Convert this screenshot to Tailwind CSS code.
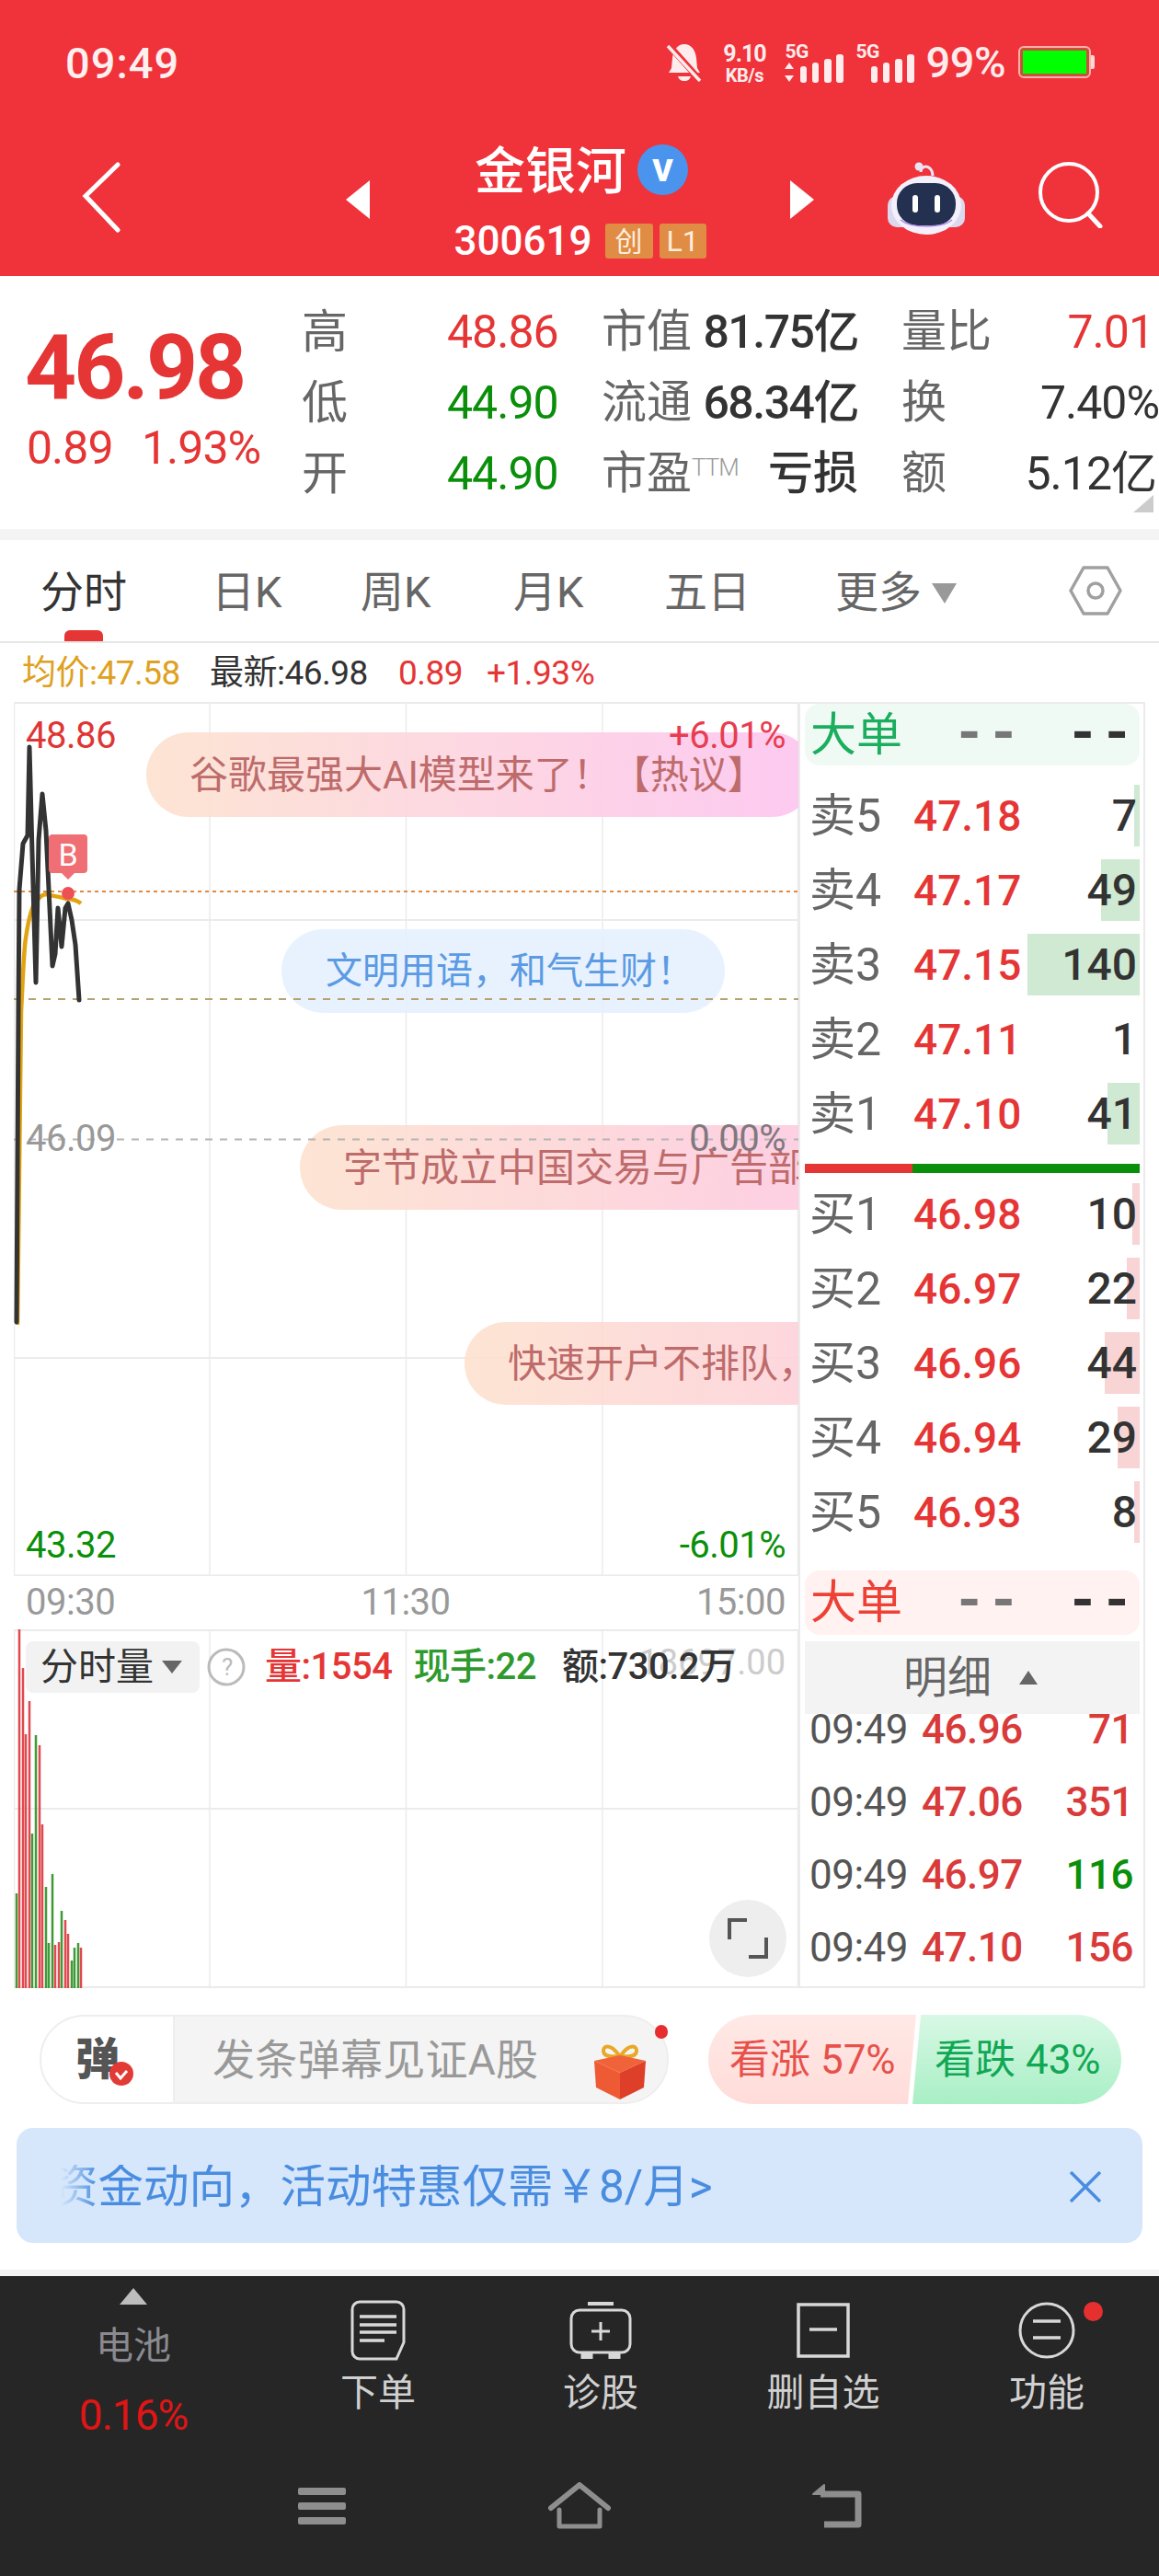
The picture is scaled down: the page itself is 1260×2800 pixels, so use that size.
<!DOCTYPE html>
<html lang="zh-CN">
<head>
  <meta charset="UTF-8">
  <meta name="viewport" content="width=device-width, initial-scale=1.0">
  <title>金银河 300619</title>
  <script src="https://cdn.jsdelivr.net/npm/@tailwindcss/browser@4"></script>
</head>

<body class="w-[1260px] h-[2800px] overflow-hidden bg-white text-[#333] [font-family:Roboto,'Noto_Sans_CJK_SC',sans-serif]">

  <!-- header -->
  <header class="h-[300px] bg-[#f0323b] text-white">
    <div class="h-[135px] flex justify-between pl-[71px] pr-[70px]">
      <span class="text-[47px] leading-[135px] font-medium tracking-[1px] text-[#fff0f0] mt-[1px]">09:49</span>
      <div class="flex items-start pt-[47px] text-[#ffecec]">
        <svg width="40" height="42" viewBox="0 0 40 42" fill="#ffecec"><path d="M20 1c8 0 12 7 13 15l1 11 3 5H3l3-5 1-11C8 8 12 1 20 1z"/><path d="M13 36h14c-1 3-3 5-7 5s-6-2-7-5z"/><path d="M3 2l34 38" stroke="#f0323b" stroke-width="7"/><path d="M2 3l35 38" stroke="#ffecec" stroke-width="3.5"/></svg>
        <div class="ml-[19px] w-[52px] flex flex-col items-center font-bold">
          <span class="text-[25px] leading-[24px] tracking-[-1px]">9.10</span>
          <span class="text-[20px] leading-[21px] mt-[1px] tracking-[-0.5px]">KB/s</span>
        </div>
        <div class="relative ml-[18px] w-[65px] h-[44px]">
          <span class="absolute left-0 -top-[2px] text-[21px] leading-[22px] font-bold tracking-[-0.5px]">5G</span>
          <svg class="absolute left-0 bottom-0" width="65" height="32" viewBox="0 0 65 32" fill="#ffecec"><path d="M5 9l5 7H0zM5 30l5-7H0z"/><rect x="17" y="13" width="7" height="18" rx="3"/><rect x="30" y="9" width="7" height="22" rx="3"/><rect x="43" y="5" width="8" height="26" rx="3"/><rect x="56" y="0" width="8" height="31" rx="3"/></svg>
        </div>
        <div class="relative ml-[12px] w-[65px] h-[44px]">
          <span class="absolute left-0 -top-[2px] text-[21px] leading-[22px] font-bold tracking-[-0.5px]">5G</span>
          <svg class="absolute left-0 bottom-0" width="65" height="32" viewBox="0 0 65 32" fill="#ffecec"><rect x="17" y="13" width="7" height="18" rx="3"/><rect x="30" y="9" width="7" height="22" rx="3"/><rect x="43" y="5" width="8" height="26" rx="3"/><rect x="56" y="0" width="8" height="31" rx="3"/></svg>
        </div>
        <span class="ml-[11px] text-[47px] leading-[42px] font-medium tracking-[-0.5px]">99%</span>
        <div class="ml-[14px] mt-[3px] flex items-center">
          <div class="w-[79px] h-[35px] rounded-[6px] border-2 border-[#ffb0a8] p-[3px] bg-[#c8503a]">
            <div class="w-full h-full bg-[#00ff00]"></div>
          </div>
          <div class="w-[4px] h-[15px] bg-[#ffd8d8] rounded-r-[2px]"></div>
        </div>
      </div>
    </div>
    <div class="h-[165px] flex pl-[88px]">
      <svg class="mt-[40px]" width="44" height="78" viewBox="0 0 44 78" fill="none" stroke="#fff" stroke-width="5" stroke-linecap="round"><path d="M40 4L5 38l35 37"/></svg>
      <svg class="ml-[243px] mt-[60px]" width="28" height="44" viewBox="0 0 28 44" fill="#fff"><path d="M27 1v42L1 22z"/></svg>
      <div class="w-[455px] flex flex-col items-center">
        <div class="flex items-center h-[80px] mt-[11px] ml-[3px]">
          <span class="text-[55px] font-medium leading-none">金银河</span>
          <span class="ml-[12px] w-[55px] h-[55px] rounded-full bg-[#4a94ee] flex items-center justify-center text-[34px] leading-none font-black -mt-[3px]">V</span>
        </div>
        <div class="flex items-center mt-[17px] h-[38px]">
          <span class="text-[44px] leading-none font-medium">300619</span>
          <span class="ml-[14px] w-[52px] h-[38px] rounded-[3px] bg-[#e08c45] text-[#ffeedd] text-[30px] flex items-center justify-center">创</span>
          <span class="ml-[7px] w-[51px] h-[38px] rounded-[3px] bg-[#e08c45] text-[#ffeedd] text-[32px] flex items-center justify-center">L1</span>
        </div>
      </div>
      <svg class="mt-[60px]" width="28" height="44" viewBox="0 0 28 44" fill="#fff"><path d="M1 1v42l26-21z"/></svg>
      <svg class="ml-[79px] mt-[40px]" width="86" height="80" viewBox="0 0 86 80">
        <path d="M36 12c0-5 5-8 10-4 2 2 3 5 3 8" fill="none" stroke="#e8e4f4" stroke-width="3"/>
        <circle cx="34" cy="6" r="4.5" fill="#e8e4f4"/>
        <rect x="0" y="38" width="84" height="34" rx="10" fill="#dcd8ee"/>
        <ellipse cx="42" cy="48" rx="38" ry="32" fill="#f3f0fb"/>
        <rect x="10" y="24" width="64" height="46" rx="22" fill="#24304f"/>
        <path d="M14 64c6 5 14 7 28 7s22-2 28-7" fill="none" stroke="#a98be8" stroke-width="1.5"/>
        <rect x="27" y="37" width="6" height="19" rx="3" fill="#fff"/>
        <rect x="51" y="37" width="6" height="19" rx="3" fill="#fff"/>
      </svg>
      <svg class="ml-[78px] mt-[41px]" width="70" height="72" viewBox="0 0 70 72" fill="none" stroke="#fff" stroke-width="4"><circle cx="33" cy="33" r="31"/><path d="M54 56l13 14" stroke-width="5" stroke-linecap="round"/></svg>
    </div>
  </header>

  <!-- quote summary -->
  <section class="relative h-[275px] flex">
    <div class="w-[328px] pl-[27px] text-[#e53535]">
      <div class="mt-[50px] text-[98px] leading-[100px] font-bold tracking-[-3px]">46.98</div>
      <div class="mt-[12px] flex text-[50px] leading-[50px] tracking-[-1px]">
        <span class="w-[127px] pl-[2px]">0.89</span>
        <span>1.93%</span>
      </div>
    </div>
    <div class="w-[932px] pt-[22px] grid grid-cols-[158px_168px_279px_47px_280px] auto-rows-[77px] items-center text-[50px] leading-none tracking-[-1px]">
      <span class="text-[#666]">高</span><span class="text-[#e53535]">48.86</span>
      <div class="flex justify-between items-center"><span class="text-[#666] text-[49px] tracking-normal">市值</span><span class="text-[#333] font-medium tracking-[-1.5px]">81.75亿</span></div>
      <span></span>
      <div class="flex justify-between items-center pr-[6px]"><span class="text-[#666] text-[49px] tracking-normal">量比</span><span class="text-[#e53535]">7.01</span></div>

      <span class="text-[#666]">低</span><span class="text-[#0a8f0a]">44.90</span>
      <div class="flex justify-between items-center"><span class="text-[#666] text-[49px] tracking-normal">流通</span><span class="text-[#333] font-medium tracking-[-1.5px]">68.34亿</span></div>
      <span></span>
      <div class="flex justify-between items-center"><span class="text-[#666] text-[49px] tracking-normal">换</span><span class="text-[#333]">7.40%</span></div>

      <span class="text-[#666]">开</span><span class="text-[#0a8f0a]">44.90</span>
      <div class="flex justify-between items-center"><span class="text-[#666] text-[49px] tracking-normal">市盈<sup class="text-[26px] text-[#999] -top-[14px] tracking-[-1px] font-light">TTM</sup></span><span class="text-[#333] font-medium text-[49px] tracking-normal">亏损</span></div>
      <span></span>
      <div class="flex justify-between items-center pr-[3px]"><span class="text-[#666] text-[49px] tracking-normal">额</span><span class="text-[#333]">5.12亿</span></div>
    </div>
    <svg class="absolute right-[6px] bottom-[18px]" width="22" height="19" viewBox="0 0 22 19" fill="#ccc"><path d="M22 0v19H0z"/></svg>
  </section>
  <div class="h-[12px] bg-[#f4f4f4]"></div>

  <!-- period tabs -->
  <nav class="relative h-[112px] flex items-center pl-[44px] pt-[5px] border-b-2 border-[#e6e6e6] text-[47px] text-[#666]">
    <span class="w-[186px] text-[#333]">分时</span>
    <span class="w-[162px]">日K</span>
    <span class="w-[166px]">周K</span>
    <span class="w-[164px]">月K</span>
    <span class="w-[186px]">五日</span>
    <span class="flex items-center">更多<svg class="ml-[11px]" width="27" height="22" viewBox="0 0 27 22" fill="#999"><path d="M0 0h27L14 22z"/></svg></span>
    <svg class="ml-[122px] -mt-[5px]" width="58" height="56" viewBox="0 0 58 56" fill="none" stroke="#a0a0a0" stroke-width="3.5" stroke-linejoin="round"><path d="M16 3h26l14 25-14 25H16L2 28z"/><circle cx="29" cy="28" r="8"/></svg>
    <span class="absolute left-[70px] bottom-0 w-[42px] h-[12px] rounded-t-[6px] bg-[#e53535]"></span>
  </nav>

  <div class="h-[64px] flex items-center pl-[24px] text-[37px] tracking-[-0.5px] leading-none">
    <span class="w-[204px] text-[#e0a020]">均价:47.58</span>
    <span class="w-[205px] text-[#333]">最新:46.98</span>
    <span class="w-[96px] text-[#e53535]">0.89</span>
    <span class="text-[#e53535]">+1.93%</span>
  </div>

  <main class="flex pl-[15px]">
    <!-- charts -->
    <div class="w-[853px]">
      <div class="relative h-[950px] overflow-hidden">
        <svg class="absolute inset-0" width="853" height="950" viewBox="15 763 853 950" fill="none" stroke="#ebebeb" stroke-width="1.5">
          <path d="M15.5 763v950M228 763v950M441.5 763v950M655 763v950M867.5 763v950"/>
          <path d="M15 764h853M15 1000h853M15 1476h853M15 1712.5h853" stroke-width="2"/>
        </svg>
        <div class="absolute left-[144px] top-[33px] w-[726px] h-[92px] rounded-full bg-gradient-to-r from-[#fde2cf] to-[#fdc4f0] opacity-90 flex items-center pl-[47px] text-[42px] text-[#b85c5c] whitespace-nowrap">谷歌最强大AI模型来了！【热议】</div>
        <div class="absolute left-[291px] top-[247px] w-[482px] h-[91px] rounded-full bg-[#e6f1fe] opacity-90 flex items-center pl-[48px] text-[40px] text-[#4a90e2] whitespace-nowrap">文明用语，和气生财！</div>
        <div class="absolute left-[311px] top-[460px] w-[700px] h-[92px] rounded-full bg-gradient-to-r from-[#fde2cf] to-[#fdc4e4] opacity-90 flex items-center pl-[47px] text-[42px] text-[#b85c5c] whitespace-nowrap">字节成立中国交易与广告部门</div>
        <div class="absolute left-[490px] top-[674px] w-[700px] h-[90px] rounded-full bg-gradient-to-r from-[#fde2cf] to-[#fdc4e4] opacity-90 flex items-center pl-[47px] text-[42px] text-[#b85c5c] whitespace-nowrap">快速开户不排队，</div>

        <svg class="absolute inset-0" width="853" height="950" viewBox="15 763 853 950" fill="none">
          <path d="M15 969h853" stroke="#e08a40" stroke-width="2" stroke-dasharray="4 4"/>
          <path d="M15 1086h853" stroke="#b8a070" stroke-width="2" stroke-dasharray="8 8"/>
          <path d="M15 1238.5h853" stroke="#b4b4b4" stroke-width="2" stroke-dasharray="8 8"/>
          <path d="M19 1440C20 1280 22 1160 23 1100C25 1060 26 1030 28 1020C30 1005 32 995 36 985C42 975 46 972 50 972C58 974 66 975 72 977C78 977 84 979 88 982" stroke="#e2a312" stroke-width="4.5"/>
          <path d="M18 1437L20 1100L21 967L25 917L30 908L32 812L35 927L39 1068L42 913L46 863L50 903L57 1050L60 1037L63 987L67 1029L71 987L74 982L78 1000L82 1027L86 1087" stroke="#333" stroke-width="5" stroke-linejoin="round" stroke-linecap="round"/>
          <path d="M57 907h34a4 4 0 014 4v34a4 4 0 01-4 4H81l-7 7-7-7H57a4 4 0 01-4-4v-34a4 4 0 014-4z" fill="#ef6f74"/>
          <circle cx="74" cy="971" r="7" fill="#ee5055"/>
        </svg>
        <span class="absolute left-[38px] top-[149px] w-[42px] text-center text-[#fff] text-[34px] leading-none">B</span>

        <span class="absolute left-[13px] top-[19px] text-[40px] leading-[36px] tracking-[-0.5px] text-[#df3535]">48.86</span>
        <span class="absolute right-[14px] top-[19px] text-[40px] leading-[36px] tracking-[-0.5px] text-[#e83c50]">+6.01%</span>
        <span class="absolute left-[13px] top-[457px] text-[40px] leading-[36px] tracking-[-0.5px] text-[#999]">46.09</span>
        <span class="absolute right-[14px] top-[457px] text-[40px] leading-[36px] tracking-[-0.5px] text-[#807880]">0.00%</span>
        <span class="absolute left-[13px] bottom-[15px] text-[40px] leading-[36px] tracking-[-0.5px] text-[#0a8f0a]">43.32</span>
        <span class="absolute right-[14px] bottom-[15px] text-[40px] leading-[36px] tracking-[-0.5px] text-[#0a8f0a]">-6.01%</span>
      </div>

      <div class="h-[58px] flex items-center justify-between pl-[13px] pr-[14px] text-[40px] tracking-[-0.5px] text-[#999] leading-none">
        <span>09:30</span><span>11:30</span><span>15:00</span>
      </div>

      <div class="relative h-[390px]">
        <svg class="absolute inset-0" width="853" height="390" viewBox="15 1771 853 390" fill="none" stroke="#ebebeb" stroke-width="1.5">
          <path d="M15.5 1771v390M228 1771v390M441.5 1771v390M655 1771v390M867.5 1771v390"/>
          <path d="M15 1772h853M15 1966h853M15 2160h853" stroke-width="2"/>
          <g stroke="#3f9a36" stroke-width="2.5">
            <path d="M18 2161V2058M35 2161V1993M39 2161V1886M50 2161V2051M53 2161V2112M57 2161V2037M67 2161V2077M78 2161V2131M81 2161V2117M85 2161V2112"/>
          </g>
          <g stroke="#df4a4f" stroke-width="2.5">
            <path d="M21 2161V1771M25 2161V1813M28 2161V1885M32 2161V1849M43 2161V1897M46 2161V1983M60 2161V2114M64 2161V2111M71 2161V2087M74 2161V2102M88 2161V2117"/>
          </g>
        </svg>
        <span class="absolute right-[14px] top-[20px] text-[38px] leading-[32px] text-[#ccc]">18697.00</span>
        <div class="relative flex items-center pt-[13px] pl-[13px] text-[40px] leading-none tracking-[-0.5px]">
          <div class="w-[189px] h-[56px] rounded-[8px] bg-[#f2f2f2] flex items-center pl-[16px] text-[41px] tracking-normal">分时量<svg class="ml-[9px]" width="22" height="14" viewBox="0 0 22 14" fill="#666"><path d="M0 0h22L11 14z"/></svg></div>
          <svg class="ml-[8px]" width="42" height="42" viewBox="0 0 42 42" fill="none" stroke="#bbb" stroke-width="3"><circle cx="21" cy="21" r="19"/></svg>
          <span class="-ml-[31px] w-[22px] text-center text-[26px] text-[#bbb]">?</span>
          <span class="ml-[30px] text-[#e53535] font-medium">量:1554</span>
          <span class="ml-[23px] text-[#2e9a2e] font-medium">现手:22</span>
          <span class="ml-[28px] text-[#333] font-medium">额:730.2万</span>
        </div>
        <div class="absolute right-[13px] bottom-[12px] w-[84px] h-[84px] rounded-full bg-[#eeeeee] flex items-center justify-center">
          <svg width="46" height="46" viewBox="0 0 46 46" fill="none" stroke="#555" stroke-width="4"><path d="M3 24V3h19M43 22v21H24"/></svg>
        </div>
      </div>
    </div>

    <!-- order book -->
    <aside class="w-[377px] h-[1398px] border-x-2 border-t-2 border-b-2 border-[#ebebeb] pl-[5px] pr-[4px] text-[46px] leading-none">
      <div class="h-[67px] rounded-[16px] bg-[#f0faf4] flex items-center pl-[6px] text-[#1aae5e] text-[50px] whitespace-nowrap">
        <span class="w-[169px]">大单</span><span class="w-[130px] -mt-[4px] text-[64px] text-[#777] font-bold tracking-[12px]">--</span><span class="-mt-[4px] text-[64px] text-[#333] font-bold tracking-[12px]">--</span>
      </div>

      <div class="mt-[14px]">
        <div class="relative h-[81px] flex items-center pl-[5px]"><span class="w-[113px] text-[#666] text-[50px]">卖5</span><span class="text-[#e53535] font-medium">47.18</span><span class="absolute right-0 top-[7px] h-[67px] w-[6px] bg-[#cfe9d2]"></span><span class="relative ml-auto pr-[3px] text-[48px] font-medium text-[#333]">7</span></div>
        <div class="relative h-[81px] flex items-center pl-[5px]"><span class="w-[113px] text-[#666] text-[50px]">卖4</span><span class="text-[#e53535] font-medium">47.17</span><span class="absolute right-0 top-[7px] h-[67px] w-[42px] bg-[#cfe9d2]"></span><span class="relative ml-auto pr-[3px] text-[48px] font-medium text-[#333]">49</span></div>
        <div class="relative h-[81px] flex items-center pl-[5px]"><span class="w-[113px] text-[#666] text-[50px]">卖3</span><span class="text-[#e53535] font-medium">47.15</span><span class="absolute right-0 top-[7px] h-[67px] w-[122px] bg-[#cfe9d2]"></span><span class="relative ml-auto pr-[3px] text-[48px] font-medium text-[#333]">140</span></div>
        <div class="relative h-[81px] flex items-center pl-[5px]"><span class="w-[113px] text-[#666] text-[50px]">卖2</span><span class="text-[#e53535] font-medium">47.11</span><span class="relative ml-auto pr-[3px] text-[48px] font-medium text-[#333]">1</span></div>
        <div class="relative h-[81px] flex items-center pl-[5px]"><span class="w-[113px] text-[#666] text-[50px]">卖1</span><span class="text-[#e53535] font-medium">47.10</span><span class="absolute right-0 top-[7px] h-[67px] w-[35px] bg-[#cfe9d2]"></span><span class="relative ml-auto pr-[3px] text-[48px] font-medium text-[#333]">41</span></div>
      </div>

      <div class="mt-[14px] h-[10px] flex">
        <div class="w-[117px] bg-[#e53535]"></div>
        <div class="flex-1 bg-[#0a8f0a]"></div>
      </div>

      <div class="mt-[4px]">
        <div class="relative h-[81px] flex items-center pl-[5px]"><span class="w-[113px] text-[#666] text-[50px]">买1</span><span class="text-[#e53535] font-medium">46.98</span><span class="absolute right-0 top-[7px] h-[67px] w-[8px] bg-[#f8d4d4]"></span><span class="relative ml-auto pr-[3px] text-[48px] font-medium text-[#333]">10</span></div>
        <div class="relative h-[81px] flex items-center pl-[5px]"><span class="w-[113px] text-[#666] text-[50px]">买2</span><span class="text-[#e53535] font-medium">46.97</span><span class="absolute right-0 top-[7px] h-[67px] w-[14px] bg-[#f8d4d4]"></span><span class="relative ml-auto pr-[3px] text-[48px] font-medium text-[#333]">22</span></div>
        <div class="relative h-[81px] flex items-center pl-[5px]"><span class="w-[113px] text-[#666] text-[50px]">买3</span><span class="text-[#e53535] font-medium">46.96</span><span class="absolute right-0 top-[7px] h-[67px] w-[38px] bg-[#f8d4d4]"></span><span class="relative ml-auto pr-[3px] text-[48px] font-medium text-[#333]">44</span></div>
        <div class="relative h-[81px] flex items-center pl-[5px]"><span class="w-[113px] text-[#666] text-[50px]">买4</span><span class="text-[#e53535] font-medium">46.94</span><span class="absolute right-0 top-[7px] h-[67px] w-[24px] bg-[#f8d4d4]"></span><span class="relative ml-auto pr-[3px] text-[48px] font-medium text-[#333]">29</span></div>
        <div class="relative h-[81px] flex items-center pl-[5px]"><span class="w-[113px] text-[#666] text-[50px]">买5</span><span class="text-[#e53535] font-medium">46.93</span><span class="absolute right-0 top-[7px] h-[67px] w-[6px] bg-[#f8d4d4]"></span><span class="relative ml-auto pr-[3px] text-[48px] font-medium text-[#333]">8</span></div>
      </div>

      <div class="mt-[23px] h-[70px] rounded-[16px] bg-[#fff2f1] flex items-center pl-[6px] text-[#ee4035] text-[50px] whitespace-nowrap">
        <span class="w-[169px]">大单</span><span class="w-[130px] -mt-[4px] text-[64px] text-[#777] font-bold tracking-[12px]">--</span><span class="-mt-[4px] text-[64px] text-[#333] font-bold tracking-[12px]">--</span>
      </div>

      <div class="mt-[7px] h-[79px] bg-[#f3f3f3] flex items-center pl-[107px] text-[48px] text-[#666]">
        <span>明细</span>
        <svg class="ml-[30px]" width="20" height="15" viewBox="0 0 20 15" fill="#666"><path d="M10 0l10 15H0z"/></svg>
      </div>

      <div class="h-[296px] overflow-hidden text-[44px] tracking-[-0.5px]">
        <div class="-mt-[23px]">
          <div class="h-[79px] flex items-center pl-[5px] pr-[7px]"><span class="w-[122px] text-[#555]">09:49</span><span class="text-[#d93a3a] font-medium">46.96</span><span class="ml-auto text-[#d93a3a] font-medium">71</span></div>
          <div class="h-[79px] flex items-center pl-[5px] pr-[7px]"><span class="w-[122px] text-[#555]">09:49</span><span class="text-[#d93a3a] font-medium">47.06</span><span class="ml-auto text-[#d93a3a] font-medium">351</span></div>
          <div class="h-[79px] flex items-center pl-[5px] pr-[7px]"><span class="w-[122px] text-[#555]">09:49</span><span class="text-[#d93a3a] font-medium">46.97</span><span class="ml-auto text-[#0a8f0a] font-medium">116</span></div>
          <div class="h-[79px] flex items-center pl-[5px] pr-[7px]"><span class="w-[122px] text-[#555]">09:49</span><span class="text-[#d93a3a] font-medium">47.10</span><span class="ml-auto text-[#d93a3a] font-medium">156</span></div>
        </div>
      </div>
    </aside>
  </main>

  <!-- comment bar -->
  <div class="h-[306px] pt-[29px]">
    <div class="flex pl-[43px]">
      <div class="relative w-[684px] h-[97px] rounded-full border-2 border-[#eeeeee] bg-[#f4f4f4] flex items-center">
        <div class="relative w-[145px] h-full rounded-l-full bg-white border-r-2 border-[#eeeeee] flex items-center pl-[37px]">
          <span class="text-[48px] font-black text-[#555] leading-none">弹</span>
          <svg class="absolute left-[74px] top-[49px]" width="26" height="26" viewBox="0 0 26 26"><circle cx="13" cy="13" r="13" fill="#e23b35"/><path d="M7 12l5 6 7-8" fill="none" stroke="#fff" stroke-width="3"/></svg>
        </div>
        <span class="ml-[41px] text-[46px] tracking-[0.3px] text-[#999] leading-none">发条弹幕见证A股</span>
        <svg class="absolute left-[600px] top-[28px]" width="58" height="62" viewBox="0 0 58 62">
          <path d="M28 14C18 0 10 4 11 10c1 5 9 6 17 5zM30 14C40 0 48 4 47 10c-1 5-9 6-17 5z" fill="none" stroke="#e9a825" stroke-width="4"/>
          <path d="M1 20l28-6 28 6-28 13z" fill="#f0633a"/>
          <path d="M1 20l28 13v29L3 49z" fill="#ee5a34"/>
          <path d="M57 20L29 33v29l26-13z" fill="#dd3f28"/>
        </svg>
        <span class="absolute -right-[1px] top-[9px] w-[14px] h-[15px] rounded-full bg-[#e62e2e]"></span>
      </div>
      <div class="ml-[43px] w-[449px] h-[97px] flex">
        <div class="w-[226px] h-full rounded-l-full bg-gradient-to-b from-[#ffe9e6] to-[#ffdcd9] [clip-path:polygon(0_0,100%_0,96%_100%,0_100%)] flex items-center pl-[23px] text-[#e8504a] text-[44px] leading-none whitespace-nowrap">看涨 57%</div>
        <div class="-ml-[4px] w-[227px] h-full rounded-r-full bg-gradient-to-b from-[#d8f8e5] to-[#a8efc5] [clip-path:polygon(4%_0,100%_0,100%_100%,0_100%)] flex items-center pl-[24px] text-[#10a855] text-[44px] leading-none whitespace-nowrap">看跌 43%</div>
      </div>
    </div>
    <div class="relative mx-[18px] mt-[26px] h-[125px] rounded-[18px] bg-[#d6e7fb] flex items-center overflow-hidden">
      <div class="ml-[48px] mt-[4px] w-[1080px] overflow-hidden whitespace-nowrap text-[49.5px] leading-none text-[#4a8de0]">
        <span class="-ml-[9px] inline-block">资金动向，活动特惠仅需￥8/月&gt;</span>
      </div>
      <span class="absolute left-[48px] top-0 w-[40px] h-full bg-gradient-to-r from-[#d6e7fb] to-transparent"></span>
      <svg class="absolute left-[1145px] top-[47px]" width="34" height="34" viewBox="0 0 34 34" fill="none" stroke="#4a8de0" stroke-width="3.5"><path d="M1 1l32 32M33 1L1 33"/></svg>
    </div>
  </div>
  <div class="h-[7px] bg-[#f4f4f4]"></div>

  <!-- bottom toolbar -->
  <footer class="h-[326px] bg-[#262626]">
    <div class="h-[210px] grid grid-cols-[290px_242px_242px_242px_244px] text-[41px] leading-none text-[#d0d0d0]">
      <div class="flex flex-col items-center pt-[13px]">
        <svg width="30" height="18" viewBox="0 0 30 18" fill="#bdbdbd"><path d="M15 0l15 18H0z"/></svg>
        <span class="mt-[25px] text-[#8a8a90]">电池</span>
        <span class="mt-[31px] text-[46px] tracking-[-1px] text-[#e01515]">0.16%</span>
      </div>
      <div class="flex flex-col items-center pt-[26px]">
        <svg width="60" height="66" viewBox="0 0 60 66" fill="none" stroke="#d8d8d8" stroke-width="3"><path d="M10 2h40a8 8 0 018 8v36l-8 18H10a8 8 0 01-8-8V10a8 8 0 018-8z"/><path d="M10 18h40M10 27h40M10 35h40M10 44h27" stroke-width="3.5"/></svg>
        <span class="mt-[15px]">下单</span>
      </div>
      <div class="flex flex-col items-center pt-[28px]">
        <svg width="68" height="62" viewBox="0 0 68 62" fill="none" stroke="#d8d8d8" stroke-width="3"><path d="M20 2h28" stroke-width="4"/><rect x="2" y="9" width="64" height="46" rx="9"/><path d="M34 22v20M24 32h20"/><path d="M14 55v6h10v-6M44 55v6h10v-6" fill="#d8d8d8"/></svg>
        <span class="mt-[17px]">诊股</span>
      </div>
      <div class="flex flex-col items-center pt-[29px]">
        <svg width="58" height="60" viewBox="0 0 58 60" fill="none" stroke="#d8d8d8" stroke-width="3.5"><rect x="2" y="2" width="54" height="56"/><path d="M14 29h30"/></svg>
        <span class="mt-[18px]">删自选</span>
      </div>
      <div class="relative flex flex-col items-center pt-[28px]">
        <svg width="62" height="62" viewBox="0 0 62 62" fill="none" stroke="#d8d8d8" stroke-width="3"><circle cx="31" cy="31" r="29"/><path d="M16 21h30M16 39h30" stroke-width="3.5"/></svg>
        <span class="mt-[17px]">功能</span>
        <span class="absolute left-[162px] top-[28px] w-[21px] h-[21px] rounded-full bg-[#e63030]"></span>
      </div>
    </div>
    <div class="pt-[14px] flex justify-center">
      <div class="w-[280px] flex justify-center items-center">
        <svg width="54" height="44" viewBox="0 0 54 44" fill="#8e8e8e"><rect x="1" y="2" width="52" height="8" rx="2"/><rect x="1" y="18" width="52" height="8" rx="2"/><rect x="1" y="34" width="52" height="8" rx="2"/></svg>
      </div>
      <div class="w-[280px] flex justify-center items-center">
        <svg width="68" height="52" viewBox="0 0 68 52" fill="none" stroke="#8e8e8e" stroke-width="6" stroke-linecap="round" stroke-linejoin="round"><path d="M3 28L34 3l31 25"/><path d="M12 30v18h44V30" stroke-width="5"/></svg>
      </div>
      <div class="w-[280px] flex justify-center items-center">
        <svg width="56" height="50" viewBox="0 0 56 50" fill="none" stroke="#8e8e8e" stroke-width="7" stroke-linejoin="round"><path d="M10 12h41v33H14"/><path d="M14 2L2 12h12z" fill="#8e8e8e" stroke-width="2"/></svg>
      </div>
    </div>
  </footer>

</body>
</html>
